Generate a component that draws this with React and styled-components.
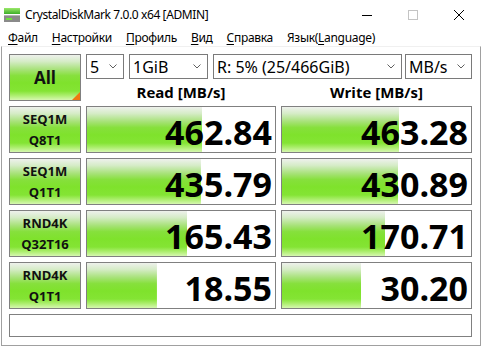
import React from "react";
import styled, { createGlobalStyle } from "styled-components";

const Global = createGlobalStyle`
  html, body { margin: 0; padding: 0; background: #ffffff; }
  body { font-family: "Open Sans", "Noto Sans", sans-serif; color: #000; }
`;

const Window = styled.div`
  width: 482px;
  height: 347px;
  display: flex;
  flex-direction: column;
  background: #ffffff;
  overflow: hidden;
`;

const TitleBar = styled.div`
  height: 29px;
  display: flex;
  align-items: center;
  flex-shrink: 0;
`;

const AppIcon = styled.svg`
  width: 16px;
  height: 16px;
  margin-left: 4px;
  margin-right: 5px;
  flex-shrink: 0;
`;

const Title = styled.div`
  font-family: "Noto Sans", "Open Sans", sans-serif;
  font-size: 12px;
  letter-spacing: -0.4px;
  color: #000;
  flex: 1;
  white-space: nowrap;
  margin-top: -1px;
`;

const WinButton = styled.div`
  width: 46px;
  height: 29px;
  display: flex;
  align-items: center;
  justify-content: center;
`;

const MenuBar = styled.div`
  height: 17px;
  display: flex;
  align-items: center;
  padding-left: 1px;
  flex-shrink: 0;
`;

const MenuItem = styled.div`
  font-family: "Noto Sans", "Open Sans", sans-serif;
  font-size: 12px;
  letter-spacing: -0.3px;
  padding: 0 7px;
  white-space: nowrap;
  u { text-decoration: underline; text-underline-offset: 2px; }
`;

const Client = styled.div`
  flex: 1;
  margin: 0 1px 1px 1px;
  border-left: 1px solid #a0a0a0;
  border-right: 1px solid #a0a0a0;
  border-bottom: 1px solid #a0a0a0;
  border-top: 1px solid #f0f0f0;
  padding: 7px 8px 7px 7px;
  display: flex;
  flex-direction: column;
  gap: 5px;
`;

const Grid = styled.div`
  display: grid;
  grid-template-columns: 72px 190px 191px;
  column-gap: 5px;
  height: 47px;
`;

const TopGrid = styled(Grid)`
  grid-template-rows: 25px 22px;
`;

const greenGrad = `linear-gradient(to bottom, #eef1ec 0%, #d6ecc8 14%, #a8e27a 32%, #86e03c 46%, #7fe22c 62%, #84e434 80%, #acee6e 90%, #d6f7b0 100%)`;

const AllButton = styled.div`
  grid-row: 1 / span 2;
  position: relative;
  border: 1px solid #808080;
  background: ${greenGrad};
  display: flex;
  align-items: center;
  justify-content: center;
  font-weight: 700;
  font-size: 17px;
  color: #111;
  &::after {
    content: "";
    position: absolute;
    right: 0;
    bottom: 0;
    width: 0;
    height: 0;
    border-style: solid;
    border-width: 0 0 8px 8px;
    border-color: transparent transparent #f07810 transparent;
  }
`;

const Controls = styled.div`
  grid-column: 2 / span 2;
  display: flex;
  gap: 5px;
`;

const Combo = styled.div`
  width: ${(p) => p.$w}px;
  margin-right: ${(p) => p.$mr || 0}px;
  box-sizing: border-box;
  height: 25px;
  border: 1px solid #7a7a7a;
  background: #fff;
  display: flex;
  align-items: center;
  padding: 0 6px 0 3px;
  font-family: "Noto Sans", "Open Sans", sans-serif;
  font-size: 16px;
  color: #000;
  white-space: nowrap;
  overflow: hidden;
`;

const ComboText = styled.span`
  flex: 1;
  overflow: hidden;
`;

const Chevron = styled.svg`
  width: 8px;
  height: 5px;
  flex-shrink: 0;
`;

const Header = styled.div`
  display: flex;
  align-items: center;
  justify-content: center;
  font-weight: 700;
  font-size: 15px;
  padding-top: 3px;
  color: #000;
`;

const Label = styled.div`
  box-sizing: border-box;
  border: 1px solid #808080;
  background: ${greenGrad};
  display: flex;
  flex-direction: column;
  align-items: center;
  justify-content: center;
  font-weight: 700;
  font-size: 13px;
  line-height: 20.5px;
  color: #111;
`;

const Result = styled.div`
  box-sizing: border-box;
  border: 1px solid #808080;
  background-color: #fff;
  background-image: ${greenGrad};
  background-repeat: no-repeat;
  background-position: left top;
  display: flex;
  align-items: center;
  justify-content: flex-end;
  padding: 4px 3px 0 0;
  font-weight: 700;
  font-size: 34px;
  line-height: 1;
  color: #000;
`;

const Status = styled.div`
  height: 23px;
  box-sizing: border-box;
  width: 463px;
  border: 1px solid #808080;
  background: #fff;
`;

const rows = [
  { a: "SEQ1M", b: "Q8T1", r: "462.84", rp: 61.2, w: "463.28", wp: 61.9 },
  { a: "SEQ1M", b: "Q1T1", r: "435.79", rp: 60.6, w: "430.89", wp: 61.4 },
  { a: "RND4K", b: "Q32T16", r: "165.43", rp: 53.2, w: "170.71", wp: 54.5 },
  { a: "RND4K", b: "Q1T1", r: "18.55", rp: 37.2, w: "30.20", wp: 41.8 },
];

const ChevronIcon = () => (
  <Chevron viewBox="0 0 8 5">
    <polyline points="0.5,0.5 4,4 7.5,0.5" fill="none" stroke="#606060" strokeWidth="1" />
  </Chevron>
);

export default function App() {
  return (
    <>
      <Global />
      <Window>
        <TitleBar>
          <AppIcon viewBox="0 0 16 16">
            <defs>
              <linearGradient id="ig" x1="0" y1="0" x2="0" y2="1">
                <stop offset="0" stopColor="#9be86a" />
                <stop offset="1" stopColor="#3cae28" />
              </linearGradient>
            </defs>
            <rect x="0" y="1" width="16" height="6" fill="url(#ig)" />
            <rect x="0" y="8" width="16" height="7" fill="#8a8a8a" />
            <rect x="0" y="8" width="16" height="1" fill="#b5b5b5" />
            <rect x="2" y="11" width="6" height="2" fill="#6fe040" />
          </AppIcon>
          <Title>CrystalDiskMark 7.0.0 x64 [ADMIN]</Title>
          <WinButton>
            <svg width="10" height="10" viewBox="0 0 10 10">
              <line x1="0" y1="5.5" x2="10" y2="5.5" stroke="#000" strokeWidth="1" />
            </svg>
          </WinButton>
          <WinButton>
            <svg width="10" height="10" viewBox="0 0 10 10">
              <rect x="0.5" y="0.5" width="9" height="9" fill="none" stroke="#c4c4c4" strokeWidth="1" />
            </svg>
          </WinButton>
          <WinButton>
            <svg width="10" height="10" viewBox="0 0 10 10">
              <line x1="0" y1="0" x2="10" y2="10" stroke="#000" strokeWidth="1" />
              <line x1="10" y1="0" x2="0" y2="10" stroke="#000" strokeWidth="1" />
            </svg>
          </WinButton>
        </TitleBar>
        <MenuBar>
          <MenuItem><u>Ф</u>айл</MenuItem>
          <MenuItem><u>Н</u>астройки</MenuItem>
          <MenuItem><u>П</u>рофиль</MenuItem>
          <MenuItem><u>В</u>ид</MenuItem>
          <MenuItem><u>С</u>правка</MenuItem>
          <MenuItem>Язык(<u>L</u>anguage)</MenuItem>
        </MenuBar>
        <Client>
          <TopGrid>
            <AllButton>All</AllButton>
            <Controls>
              <Combo $w={38}><ComboText>5</ComboText><ChevronIcon /></Combo>
              <Combo $w={79}><ComboText>1GiB</ComboText><ChevronIcon /></Combo>
              <Combo $w={189} $mr={-2}><ComboText>R: 5% (25/466GiB)</ComboText><ChevronIcon /></Combo>
              <Combo $w={67}><ComboText>MB/s</ComboText><ChevronIcon /></Combo>
            </Controls>
            <Header>Read [MB/s]</Header>
            <Header>Write [MB/s]</Header>
          </TopGrid>
          {rows.map((row, i) => (
            <Grid key={i}>
              <Label>
                <span>{row.a}</span>
                <span>{row.b}</span>
              </Label>
              <Result style={{ backgroundSize: `${row.rp}% 100%` }}>{row.r}</Result>
              <Result style={{ backgroundSize: `${row.wp}% 100%` }}>{row.w}</Result>
            </Grid>
          ))}
          <Status />
        </Client>
      </Window>
    </>
  );
}
